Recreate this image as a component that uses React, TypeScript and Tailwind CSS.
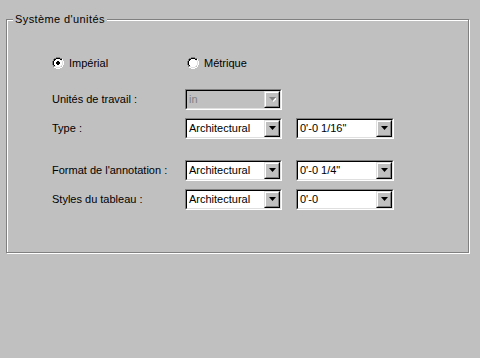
import React from 'react';

function Radio({ checked }: { checked?: boolean }) {
  return (
    <svg width="12" height="12" viewBox="0 0 12 12" className="shrink-0">
      <path d="M4 0h4v1H4zM2 1h2v1H2zM8 1h2v1H8zM1 2h1v2H1zM0 4h1v4H0zM1 8h1v2H1z" fill="#808080" />
      <path d="M4 1h4v1H4zM2 2h2v1H2zM8 2h2v1H8zM2 3h1v1H2zM1 4h1v4H1zM2 8h1v1H2z" fill="#000" />
      <path d="M10 2h1v2h-1zM11 4h1v4h-1zM10 8h1v2h-1zM8 10h2v1H8zM2 10h2v1H2zM4 11h4v1H4z" fill="#fff" />
      <path d="M9 3h1v1H9zM10 4h1v4h-1zM9 8h1v1H9zM8 9h1v1H8zM3 9h1v1H3zM4 10h4v1H4z" fill="#dfdfdf" />
      <path d="M4 2h4v1H4zM3 3h6v1H3zM2 4h8v4H2zM3 8h6v1H3zM4 9h4v1H4z" fill="#fff" />
      {checked && <path d="M5 4h2v1H5zM4 5h4v2H4zM5 7h2v1H5z" fill="#000" />}
    </svg>
  );
}

function Combo({ value, width, disabled }: { value: string; width: string; disabled?: boolean }) {
  return (
    <div className={`${width} h-[21px] border border-t-[#808080] border-l-[#808080] border-b-white border-r-white`}>
      <div className={`h-full flex items-center border border-t-black border-l-black border-b-[#dfdfdf] border-r-[#dfdfdf] ${disabled ? 'bg-[#c0c0c0]' : 'bg-white'}`}>
        <span className={`flex-1 pl-[2px] leading-none ${disabled ? 'text-[#808080]' : 'text-black'}`}>{value}</span>
        <div className="w-[16px] h-[17px] bg-[#c0c0c0] border border-t-[#dfdfdf] border-l-[#dfdfdf] border-b-black border-r-black">
          <div className="w-full h-full flex items-center justify-center border border-t-white border-l-white border-b-[#808080] border-r-[#808080]">
            <svg width="7" height="5" viewBox="0 0 7 5">
              {disabled && <path d="M1 1h7l-3.5 4z" fill="#fff" />}
              <path d="M0 0h7L3.5 4z" fill={disabled ? '#808080' : '#000'} />
            </svg>
          </div>
        </div>
      </div>
    </div>
  );
}

function Row({ label, children, className }: { label: string; children: React.ReactNode; className?: string }) {
  return (
    <div className={`flex items-center ${className ?? ''}`}>
      <div className="w-[133px]">{label}</div>
      <div className="flex gap-[14px]">{children}</div>
    </div>
  );
}

export default function App() {
  return (
    <div
      className="w-[480px] h-[358px] bg-[#c0c0c0] pt-[19px] pl-[6px] text-[11px] text-black"
      style={{ fontFamily: '"Liberation Sans", Arial, sans-serif' }}
    >
      <div className="relative w-[463px] h-[234px] border border-[#808080] shadow-[inset_1px_1px_0_#fff,1px_1px_0_#fff] pl-[45px] pt-[37px]">
        {/* legend sits over the top border */}
        <div className="absolute left-[6px] top-[-8px] px-[2px] bg-[#c0c0c0] leading-[14px] tracking-[0.4px]">Système d'unités</div>

        <div className="flex items-center h-[12px]">
          <div className="flex items-center gap-[5px] w-[135px]">
            <Radio checked />
            <span>Impérial</span>
          </div>
          <div className="flex items-center gap-[5px]">
            <Radio />
            <span>Métrique</span>
          </div>
        </div>

        <Row label="Unités de travail :" className="mt-[20px]">
          <Combo value="in" width="w-[97px]" disabled />
        </Row>
        <Row label="Type :" className="mt-[8px]">
          <Combo value="Architectural" width="w-[97px]" />
          <Combo value={"0'-0 1/16\""} width="w-[98px]" />
        </Row>
        <Row label="Format de l'annotation :" className="mt-[21px]">
          <Combo value="Architectural" width="w-[97px]" />
          <Combo value={"0'-0 1/4\""} width="w-[98px]" />
        </Row>
        <Row label="Styles du tableau :" className="mt-[8px]">
          <Combo value="Architectural" width="w-[97px]" />
          <Combo value="0'-0" width="w-[98px]" />
        </Row>
      </div>
    </div>
  );
}
